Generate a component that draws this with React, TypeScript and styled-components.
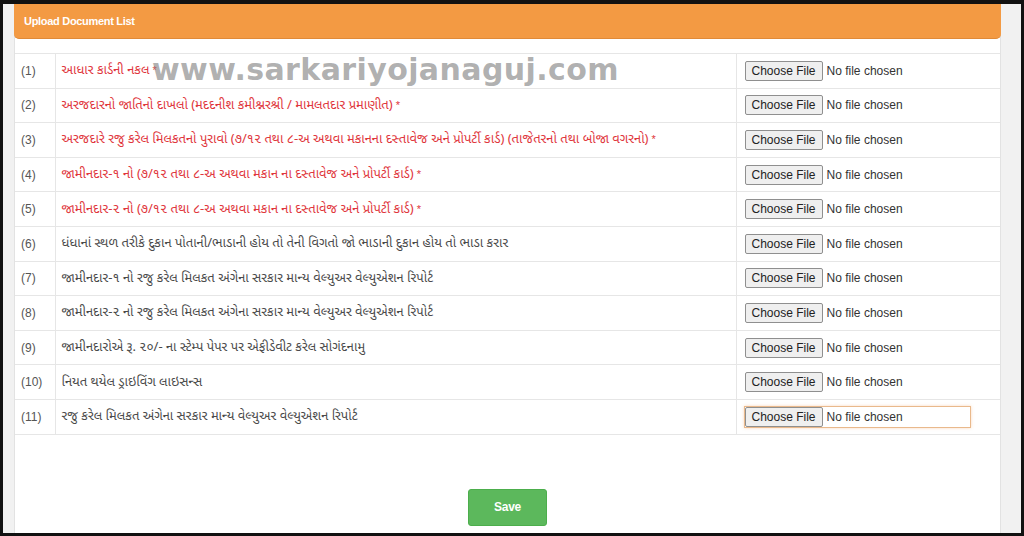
import styled, { createGlobalStyle } from "styled-components";

interface DocumentRow {
  label: string;
  required: boolean;
}

const documents: DocumentRow[] = [
  { label: "આધાર કાર્ડની નકલ", required: true },
  {
    label:
      "અરજદારનો જાતિનો દાખલો (મદદનીશ કમીશ્નરશ્રી / મામલતદાર પ્રમાણીત)",
    required: true,
  },
  {
    label:
      "અરજદારે રજુ કરેલ મિલકતનો પુરાવો (૭/૧૨ તથા ૮-અ અથવા મકાનના દસ્તાવેજ અને પ્રોપર્ટી કાર્ડ) (તાજેતરનો તથા બોજા વગરનો)",
    required: true,
  },
  {
    label:
      "જામીનદાર-૧ નો (૭/૧૨ તથા ૮-અ અથવા મકાન ના દસ્તાવેજ અને પ્રોપર્ટી કાર્ડ)",
    required: true,
  },
  {
    label:
      "જામીનદાર-૨ નો (૭/૧૨ તથા ૮-અ અથવા મકાન ના દસ્તાવેજ અને પ્રોપર્ટી કાર્ડ)",
    required: true,
  },
  {
    label:
      "ધંધાનાં સ્થળ તરીકે દુકાન પોતાની/ભાડાની હોય તો તેની વિગતો જો ભાડાની દુકાન હોય તો ભાડા કરાર",
    required: false,
  },
  {
    label:
      "જામીનદાર-૧ નો રજુ કરેલ મિલકત અંગેના સરકાર માન્ય વેલ્યુઅર વેલ્યુએશન રિપોર્ટ",
    required: false,
  },
  {
    label:
      "જામીનદાર-૨ નો રજુ કરેલ મિલકત અંગેના સરકાર માન્ય વેલ્યુઅર વેલ્યુએશન રિપોર્ટ",
    required: false,
  },
  {
    label: "જામીનદારોએ રૂ. ૨૦/- ના સ્ટેમ્પ પેપર પર એફીડેવીટ કરેલ સોગંદનામુ",
    required: false,
  },
  { label: "નિયત થયેલ ડ્રાઇવિંગ લાઇસન્સ", required: false },
  {
    label: "રજુ કરેલ મિલકત અંગેના સરકાર માન્ય વેલ્યુઅર વેલ્યુએશન રિપોર્ટ",
    required: false,
  },
];

export default function App() {
  return (
    <>
      <GlobalStyle />
      <Frame>
        <Panel>
          <PanelHeader>Upload Document List</PanelHeader>
          <TableWrap>
            <Watermark>www.sarkariyojanaguj.com</Watermark>
            <DocTable>
              <colgroup>
                <col style={{ width: 40 }} />
                <col />
                <col style={{ width: 264 }} />
              </colgroup>
              <tbody>
                {documents.map((doc, i) => (
                  <tr key={i}>
                    <NumCell>({i + 1})</NumCell>
                    <LabelCell $required={doc.required}>
                      {doc.label}
                      {doc.required && <Star> *</Star>}
                    </LabelCell>
                    <FileCell>
                      <FileInput
                        type="file"
                        $focused={i === documents.length - 1}
                      />
                    </FileCell>
                  </tr>
                ))}
              </tbody>
            </DocTable>
          </TableWrap>
          <Actions>
            <SaveButton type="button">Save</SaveButton>
          </Actions>
        </Panel>
      </Frame>
    </>
  );
}

const GlobalStyle = createGlobalStyle`
  html, body {
    margin: 0;
    padding: 0;
    background: #111;
  }
  body {
    font-family: "Liberation Sans", Arial, "Noto Sans Gujarati", sans-serif;
  }
`;

const Frame = styled.div`
  box-sizing: border-box;
  height: 536px;
  border: 3px solid #111;
  border-top-width: 4px;
  background: #f1f1f1;
  padding: 0 20px 0 11px;
  display: flex;
`;

const Panel = styled.div`
  flex: 1;
  background: #fff;
  border-left: 1px solid #e2e2e2;
  border-right: 1px solid #e2e2e2;
  display: flex;
  flex-direction: column;
`;

const PanelHeader = styled.div`
  height: 35px;
  margin: 0 -1px;
  background: #f39a43;
  border-radius: 0 0 5px 5px;
  border-bottom: 1px solid #e08a38;
  color: #fff;
  font-family: "Liberation Sans", Arial, sans-serif;
  font-weight: bold;
  font-size: 11px;
  letter-spacing: -0.3px;
  display: flex;
  align-items: center;
  padding-left: 10px;
  box-sizing: border-box;
`;

const TableWrap = styled.div`
  position: relative;
  margin-top: 14px;
`;

const Watermark = styled.div`
  position: absolute;
  left: 137px;
  top: -1px;
  font-family: "DejaVu Sans", Verdana, sans-serif;
  font-weight: bold;
  font-size: 30px;
  letter-spacing: 0.4px;
  color: rgba(125, 125, 125, 0.62);
  pointer-events: none;
  z-index: 2;
`;

const DocTable = styled.table`
  width: 100%;
  border-collapse: collapse;
  table-layout: fixed;

  tr {
    height: 34.6px;
  }

  td {
    border-top: 1px solid #e6e6e6;
    border-bottom: 1px solid #e6e6e6;
    padding: 0 6px;
    vertical-align: middle;
    white-space: nowrap;
  }
`;

const NumCell = styled.td`
  font-family: "Liberation Sans", Arial, sans-serif;
  font-size: 12px;
  color: #555;
  border-right: 1px solid #e6e6e6;
`;

const LabelCell = styled.td<{ $required: boolean }>`
  font-family: "Noto Sans Gujarati", "Lohit Gujarati", "Liberation Sans", sans-serif;
  font-size: 13px;
  color: ${(p) => (p.$required ? "#e0363c" : "#4a4a4a")};
  border-right: 1px solid #e6e6e6;
  overflow: hidden;
`;

const Star = styled.span`
  font-family: "Liberation Sans", Arial, sans-serif;
  font-size: 11px;
`;

const FileCell = styled.td`
  && {
    padding-left: 7px;
  }
`;

const FileInput = styled.input<{ $focused: boolean }>`
  box-sizing: border-box;
  width: 227px;
  height: 22px;
  font-family: "Liberation Sans", Arial, sans-serif;
  font-size: 12px;
  color: #333;
  border: 1px solid ${(p) => (p.$focused ? "#e9b98c" : "transparent")};
  box-shadow: ${(p) => (p.$focused ? "0 0 3px rgba(240, 150, 70, 0.35)" : "none")};
  padding: 0;

  &::file-selector-button {
    font-family: "Liberation Sans", Arial, sans-serif;
    font-size: 12px;
    color: #222;
    background: #efefef;
    border: 1px solid #8f8f8f;
    border-radius: 2px;
    height: 20px;
    padding: 0 6px;
    margin-right: 4px;
  }
`;

const Actions = styled.div`
  display: flex;
  justify-content: center;
  margin-top: 54px;
`;

const SaveButton = styled.button`
  width: 79px;
  height: 37px;
  background: #5cb85c;
  border: 1px solid #4cae4c;
  border-radius: 3px;
  color: #fff;
  font-family: "Liberation Sans", Arial, sans-serif;
  font-weight: bold;
  font-size: 12px;
  letter-spacing: -0.3px;
`;
